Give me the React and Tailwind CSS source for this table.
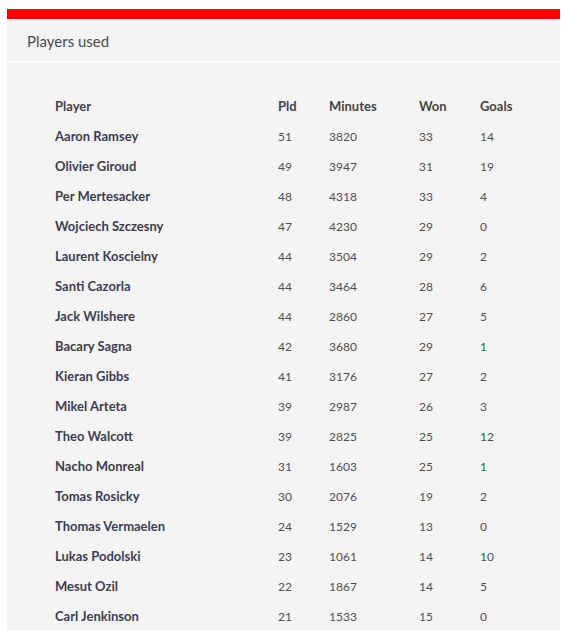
const PLAYERS = [
  ['Aaron Ramsey', 51, 3820, 33, 14],
  ['Olivier Giroud', 49, 3947, 31, 19],
  ['Per Mertesacker', 48, 4318, 33, 4],
  ['Wojciech Szczesny', 47, 4230, 29, 0],
  ['Laurent Koscielny', 44, 3504, 29, 2],
  ['Santi Cazorla', 44, 3464, 28, 6],
  ['Jack Wilshere', 44, 2860, 27, 5],
  ['Bacary Sagna', 42, 3680, 29, 1],
  ['Kieran Gibbs', 41, 3176, 27, 2],
  ['Mikel Arteta', 39, 2987, 26, 3],
  ['Theo Walcott', 39, 2825, 25, 12],
  ['Nacho Monreal', 31, 1603, 25, 1],
  ['Tomas Rosicky', 30, 2076, 19, 2],
  ['Thomas Vermaelen', 24, 1529, 13, 0],
  ['Lukas Podolski', 23, 1061, 14, 10],
  ['Mesut Ozil', 22, 1867, 14, 5],
  ['Carl Jenkinson', 21, 1533, 15, 0],
];

const COLS = 'grid grid-cols-[223px_51px_90px_61px_1fr] items-center';

export default function App() {
  return (
    <div className="w-[567px] h-[630px] overflow-hidden bg-white pt-[9px] px-[7px] font-['Lato',sans-serif]">
      <div className="h-[10px] bg-[#ff0000]" />
      <div className="bg-[#f4f4f4] h-[700px]">
        <div className="h-[44px] flex items-center pl-[20px] pt-[2px] border-b-2 border-white text-[15px] text-[#4a4a4a]">
          Players used
        </div>
        <div className="pl-[48px] pt-[28px]">
          <div className={`${COLS} h-[31px] text-[13px] font-bold text-[#444]`}>
            <span>Player</span>
            <span>Pld</span>
            <span>Minutes</span>
            <span>Won</span>
            <span>Goals</span>
          </div>
          {PLAYERS.map(([name, pld, mins, won, goals]) => (
            <div key={name} className={`${COLS} h-[30px] text-[12px] text-[#505050]`}>
              <span className="text-[13px] font-bold text-[#3d3d50]">{name}</span>
              <span>{pld}</span>
              <span>{mins}</span>
              <span>{won}</span>
              <span>{goals}</span>
            </div>
          ))}
        </div>
      </div>
    </div>
  );
}
